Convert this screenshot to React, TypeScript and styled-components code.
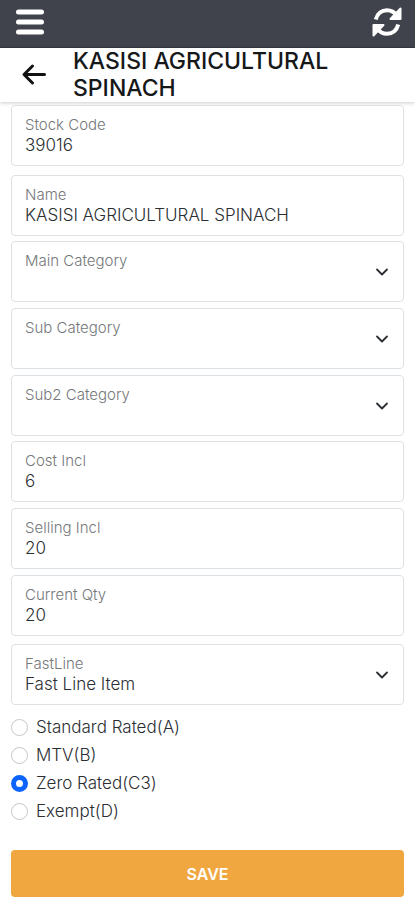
import React, { useId, useState } from "react";
import styled, { createGlobalStyle } from "styled-components";

const GlobalStyle = createGlobalStyle`
  *, *::before, *::after { box-sizing: border-box; }
  body {
    margin: 0;
    background: #fff;
    color: #2b2f33;
    font-family: Inter, "Liberation Sans", sans-serif;
    font-size: 17px;
    font-weight: 300;
  }
  button, input, select { font: inherit; color: inherit; }
`;

const TopBar = styled.header`
  display: flex;
  align-items: center;
  justify-content: space-between;
  height: 48px;
  padding: 0 12px 4px 16px;
  background: #40434b;
  border-bottom: 1px solid #34373e;
`;

const IconButton = styled.button`
  display: flex;
  flex: none;
  padding: 0;
  border: 0;
  background: none;
  color: inherit;
  cursor: pointer;
`;

const LightIconButton = styled(IconButton)`
  color: #fff;
`;

const TitleBar = styled.div`
  display: flex;
  align-items: center;
  gap: 26px;
  min-height: 54px;
  padding: 0 20px;
  background: #fff;
  box-shadow: 0 1px 4px rgba(0, 0, 0, 0.2);
`;

const Title = styled.h1`
  margin: 0;
  color: #16181a;
  font-size: 23px;
  font-weight: 500;
  line-height: 27px;
`;

const Form = styled.form`
  display: flex;
  flex-direction: column;
  padding: 3px 11px 0;
`;

const Sections = styled.div`
  display: flex;
  flex-direction: column;
  gap: 5px;
`;

const Section = styled.div<{ $gap: number }>`
  display: flex;
  flex-direction: column;
  gap: ${(p) => p.$gap}px;
`;

const FieldBox = styled.div`
  display: flex;
  align-items: center;
  height: 61px;
  padding: 0 13px;
  border: 1px solid #dee1e3;
  border-radius: 4px;
  background: #fff;
`;

const FieldText = styled.div`
  display: flex;
  flex: 1;
  flex-direction: column;
  align-self: flex-start;
  min-width: 0;
  padding-top: 9px;
`;

const Label = styled.label`
  color: #74787b;
  font-size: 15px;
  line-height: 20px;
`;

const TextInput = styled.input`
  width: 100%;
  height: 20px;
  padding: 0;
  border: 0;
  outline: 0;
  background: none;
  line-height: 20px;
`;

const Select = styled.select`
  width: 100%;
  height: 20px;
  padding: 0;
  border: 0;
  outline: 0;
  background: none;
  line-height: 20px;
  appearance: none;
`;

const RadioGroup = styled.fieldset`
  display: flex;
  flex-direction: column;
  margin: 0;
  padding: 8px 0 0;
  border: 0;
`;

const RadioLabel = styled.label`
  display: flex;
  align-items: center;
  gap: 8px;
  min-height: 28px;
  line-height: 28px;
`;

const Radio = styled.input`
  width: 17px;
  height: 17px;
  margin: 0;
  border: 1px solid #c3c6c9;
  border-radius: 50%;
  background: #fff;
  appearance: none;

  &:checked {
    border: 5px solid #0d63fd;
  }
`;

const SaveButton = styled.button`
  height: 47px;
  margin-top: 25px;
  border: 0;
  border-radius: 4px;
  background: #f0a73f;
  color: #fff;
  font-size: 16px;
  font-weight: 600;
  cursor: pointer;
`;

const MenuIcon = () => (
  <svg width="28" height="28" viewBox="0 0 28 28" fill="none" stroke="currentColor" strokeWidth="5" strokeLinecap="round" aria-hidden="true">
    <path d="M2.5 4h23M2.5 14h23M2.5 24h23" />
  </svg>
);

const SyncIcon = () => (
  <svg width="32" height="32" viewBox="0 0 32 32" fill="none" stroke="currentColor" strokeWidth="4" aria-hidden="true">
    <path d="M4.8 13.5C6.200 7.500 10.800 4.200 16 4.200c4.200 0 7.500 2 10 5.500" />
    <path d="M27.200 18.500C25.800 24.500 21.200 27.800 16 27.800c-4.200 0-7.500-2-10-5.500" />
    <path d="M29.500 2.500v10.500h-10z" fill="currentColor" strokeWidth="2" strokeLinejoin="round" />
    <path d="M2.500 29.500v-10.500h10z" fill="currentColor" strokeWidth="2" strokeLinejoin="round" />
  </svg>
);

const BackIcon = () => (
  <svg width="27" height="24" viewBox="0 0 27 24" fill="none" stroke="#111" strokeWidth="3" strokeLinecap="round" strokeLinejoin="round" aria-hidden="true">
    <path d="M12.500 3L4 11.500l8.500 8.500M4.500 11.500H24.500" />
  </svg>
);

const ChevronIcon = () => (
  <svg width="16" height="16" viewBox="0 0 16 16" fill="none" stroke="#2b2f33" strokeWidth="1.800" strokeLinecap="round" strokeLinejoin="round" aria-hidden="true">
    <path d="M3 5.500l5 5 5-5" />
  </svg>
);

function TextField({ label, value }: { label: string; value: string }) {
  const id = useId();
  return (
    <FieldBox>
      <FieldText>
        <Label htmlFor={id}>{label}</Label>
        <TextInput id={id} defaultValue={value} />
      </FieldText>
    </FieldBox>
  );
}

function SelectField({ label, options = [""] }: { label: string; options?: string[] }) {
  const id = useId();
  return (
    <FieldBox>
      <FieldText>
        <Label htmlFor={id}>{label}</Label>
        <Select id={id}>
          {options.map((option) => (
            <option key={option}>{option}</option>
          ))}
        </Select>
      </FieldText>
      <ChevronIcon />
    </FieldBox>
  );
}

const TAX_RATES = ["Standard Rated(A)", "MTV(B)", "Zero Rated(C3)", "Exempt(D)"];

export default function App() {
  const [rate, setRate] = useState("Zero Rated(C3)");
  return (
    <>
      <GlobalStyle />
      <TopBar>
        <LightIconButton type="button" aria-label="Menu">
          <MenuIcon />
        </LightIconButton>
        <LightIconButton type="button" aria-label="Refresh">
          <SyncIcon />
        </LightIconButton>
      </TopBar>
      <TitleBar>
        <IconButton type="button" aria-label="Back">
          <BackIcon />
        </IconButton>
        <Title>KASISI AGRICULTURAL SPINACH</Title>
      </TitleBar>
      <Form onSubmit={(e) => e.preventDefault()}>
        <Sections>
          <Section $gap={9}>
            <TextField label="Stock Code" value="39016" />
            <TextField label="Name" value="KASISI AGRICULTURAL SPINACH" />
          </Section>
          <Section $gap={6}>
            <SelectField label="Main Category" />
            <SelectField label="Sub Category" />
            <SelectField label="Sub2 Category" />
          </Section>
          <Section $gap={6}>
            <TextField label="Cost Incl" value="6" />
            <TextField label="Selling Incl" value="20" />
            <Section $gap={8}>
              <TextField label="Current Qty" value="20" />
              <SelectField label="FastLine" options={["Fast Line Item"]} />
            </Section>
          </Section>
        </Sections>
        <RadioGroup aria-label="Tax rate">
          {TAX_RATES.map((name) => (
            <RadioLabel key={name}>
              <Radio type="radio" name="rate" checked={rate === name} onChange={() => setRate(name)} />
              {name}
            </RadioLabel>
          ))}
        </RadioGroup>
        <SaveButton type="submit">SAVE</SaveButton>
      </Form>
    </>
  );
}
